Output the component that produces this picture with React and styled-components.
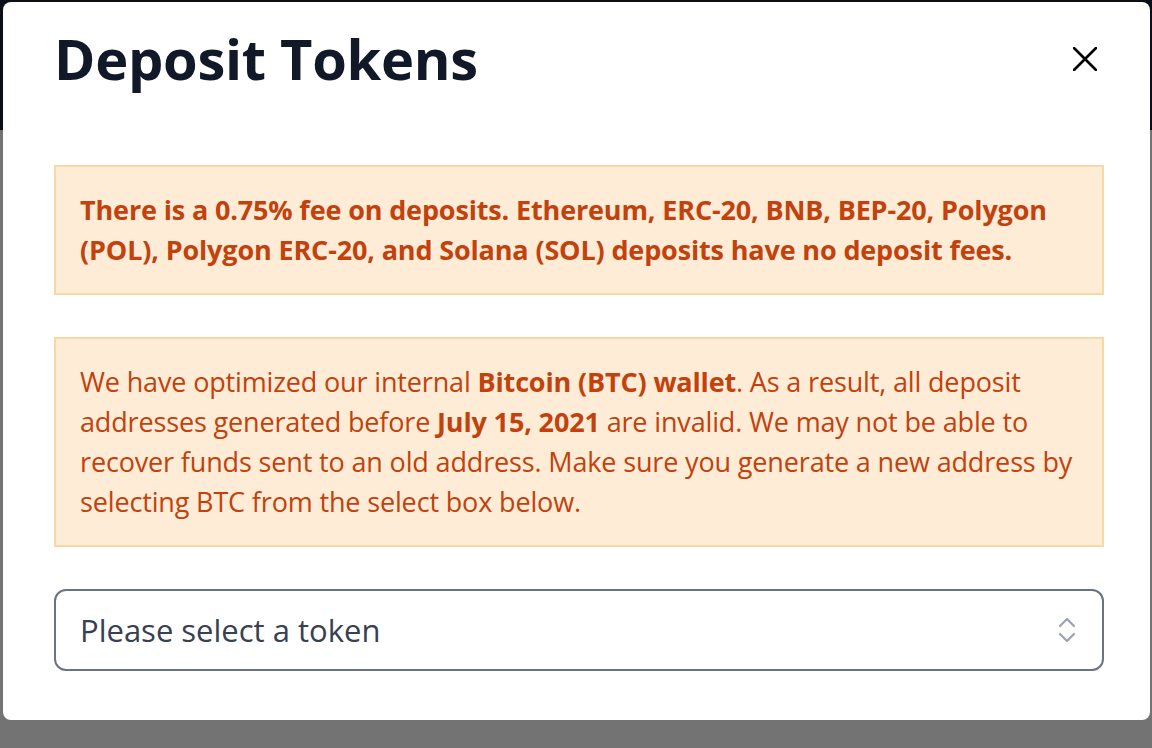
import React from 'react'
import styled, { createGlobalStyle } from 'styled-components'

const GlobalStyle = createGlobalStyle`
    html, body {
        margin: 0;
        padding: 0;
        height: 100%;
        overflow: hidden;
        background: #ffffff;
        font-family: "Open Sans", "Lato", sans-serif;
    }
    #root {
        height: 100%;
    }
`

const Page = styled.div`
    position: relative;
    height: 748px;
    width: 1152px;
    overflow: hidden;
`

const PageHeader = styled.div`
    height: 130px;
    background: #1c2230;
`

const Backdrop = styled.div`
    position: absolute;
    inset: 0;
    background: rgba(0, 0, 0, 0.55);
`

const Modal = styled.div`
    position: absolute;
    left: 3px;
    top: 2px;
    width: 1147px;
    height: 718px;
    background: #ffffff;
    border-radius: 8px;
    box-sizing: border-box;
    padding: 0 46px 0 51px;
    display: flex;
    flex-direction: column;
`

const ModalHeader = styled.div`
    display: flex;
    align-items: center;
    justify-content: space-between;
    height: 118px;
    padding-bottom: 2px;
`

const Title = styled.h1`
    margin: 0;
    font-size: 56px;
    font-weight: 700;
    color: #111827;
    line-height: 1;
    letter-spacing: -0.3px;
    transform: translateY(-3px);
`

const CloseButton = styled.button`
    border: none;
    background: none;
    padding: 0;
    margin-right: 5px;
    width: 28px;
    height: 28px;
    display: flex;
    align-items: center;
    justify-content: center;
    cursor: pointer;
    transform: translateY(-2px);
`

const Body = styled.div`
    display: flex;
    flex-direction: column;
    gap: 42px;
    margin-top: 43px;
`

const Alert = styled.div`
    background: #feecd6;
    border: 2px solid #f8d9a6;
    padding: 23px 24px;
    color: #c2410c;
    font-size: 27px;
    letter-spacing: -0.15px;
    line-height: 40px;
    font-weight: ${p => (p.$bold ? 700 : 400)};
`

const Strong = styled.strong`
    font-weight: 700;
`

const Select = styled.div`
    height: 82px;
    box-sizing: border-box;
    border: 2px solid #6b7280;
    border-radius: 12px;
    display: flex;
    align-items: center;
    justify-content: space-between;
    padding: 0 26px 0 24px;
    font-size: 31px;
    color: #374151;
`

export default function App() {
    return (
        <Page>
            <GlobalStyle />
            <PageHeader />
            <Backdrop />
            <Modal>
                <ModalHeader>
                    <Title>Deposit Tokens</Title>
                    <CloseButton aria-label="Close">
                        <svg width="24" height="24" viewBox="0 0 24 24">
                            <path d="M1 1L23 23M23 1L1 23" stroke="#000" strokeWidth="2.6" strokeLinecap="round" fill="none" />
                        </svg>
                    </CloseButton>
                </ModalHeader>
                <Body>
                    <Alert $bold>
                        There is a 0.75% fee on deposits. Ethereum, ERC-20, BNB, BEP-20, Polygon (POL), Polygon ERC-20, and Solana (SOL) deposits have no deposit fees.
                    </Alert>
                    <Alert>
                        We have optimized our internal <Strong>Bitcoin (BTC) wallet</Strong>. As a result, all deposit addresses generated before <Strong>July 15, 2021</Strong> are invalid. We may not be able to recover funds sent to an old address. Make sure you generate a new address by selecting BTC from the select box below.
                    </Alert>
                    <Select>
                        Please select a token
                        <svg width="18" height="28" viewBox="0 0 18 28">
                            <path d="M2 10L9 3L16 10M2 18L9 25L16 18" stroke="#9ca3af" strokeWidth="2.2" strokeLinecap="round" strokeLinejoin="round" fill="none" />
                        </svg>
                    </Select>
                </Body>
            </Modal>
        </Page>
    )
}
